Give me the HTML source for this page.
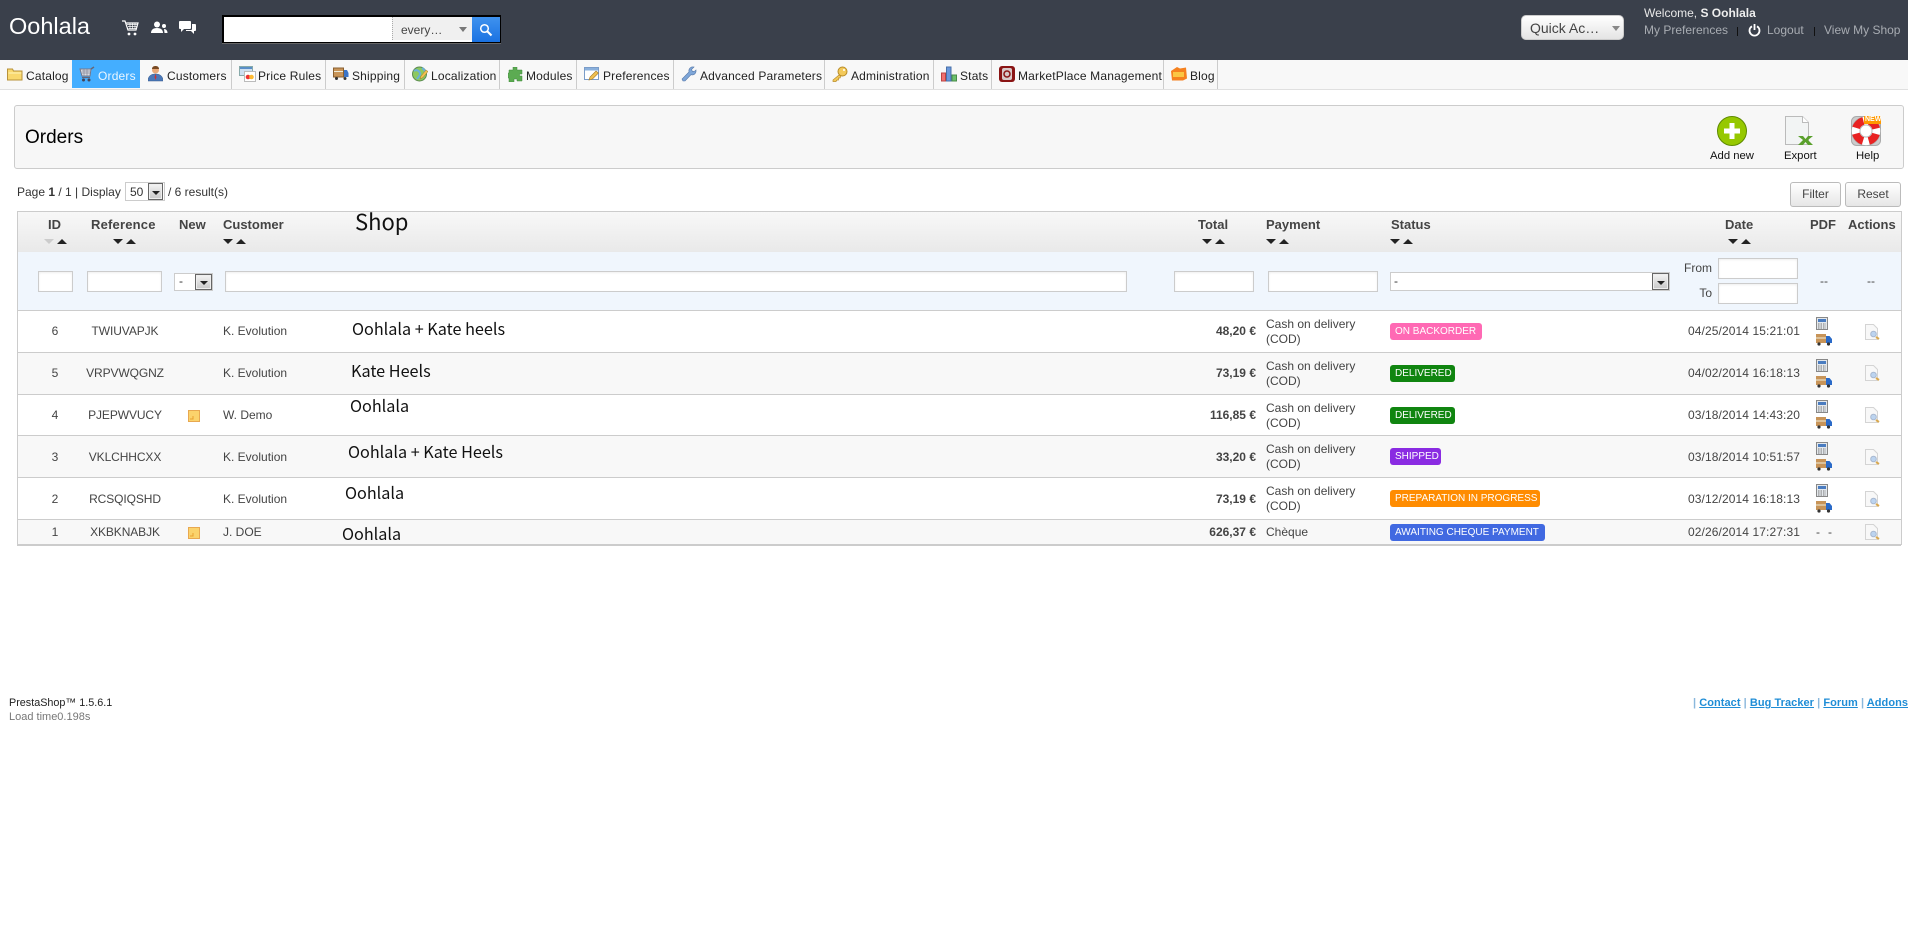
<!DOCTYPE html>
<html lang="en"><head><meta charset="utf-8"><title>Orders</title>
<style>
html,body{margin:0;padding:0;width:1908px;height:950px;overflow:hidden;background:#fff;font-family:"Liberation Sans",Arial,sans-serif;font-size:12px;color:#444}
div,span,a,svg{position:absolute}
b span,b{position:static}
.t{white-space:nowrap;line-height:16px;height:16px}
.h{font-weight:bold;font-size:13px;color:#444;top:217px}
.n{color:#222;top:68px;letter-spacing:.18px}
.sep{top:60px;width:1px;height:29px;background:#ccc}
.dn,.up{width:0;height:0;border-left:5px solid transparent;border-right:5px solid transparent;top:239px}
.dn{border-top:5px solid #222}.up{border-bottom:5px solid #222}
.inp{background:#fff;border:1px solid #ccc;box-sizing:border-box;box-shadow:inset 0 1px 2px #eee}
.sb{box-sizing:border-box;background:linear-gradient(#f4f4f4,#c8c8c8);border:1px solid #666;box-shadow:inset 0 0 0 1px #eee}
.sb:after{content:"";position:absolute;left:50%;top:50%;margin:-1px 0 0 -4px;border-left:4px solid transparent;border-right:4px solid transparent;border-top:4px solid #222}
.hl{left:17px;width:1884px;height:1px;background:#ccc}
.c{text-align:center}
.r{text-align:right}
.s{font-family:"Noto Sans CJK JP","Liberation Sans",sans-serif;color:#111;font-size:16.200px;line-height:24px;height:24px;white-space:nowrap}
.bd{left:1390px;height:17px;border-radius:3px;color:#fff;font-size:10px;line-height:18px;padding:0 5px;white-space:nowrap;box-sizing:border-box}
.btn{box-sizing:border-box;top:182px;height:25px;border:1px solid #bbb;border-radius:3px;background:linear-gradient(#fff,#e6e6e6);text-align:center;line-height:23px;color:#444}
.d{letter-spacing:.1px}
</style></head><body>

<!-- header -->
<div style="left:0;top:0;width:1908px;height:60px;background:#3a404b"></div>
<div class="t" style="left:9px;top:13px;font-size:23.500px;line-height:26px;height:26px;color:#fff">Oohlala</div>
<svg style="left:122px;top:20px" width="17" height="16" viewBox="0 0 17 16"><path d="M0 1h3l3 9h8l2-7H4" fill="none" stroke="#fff" stroke-width="1.200"/><path d="M5 4.500h10M6 6.500h9M6.500 8.500h8M8 3v6M10.500 3v6M13 3v6" stroke="#fff" stroke-width=".7"/><circle cx="7" cy="14" r="1.400" fill="#fff"/><circle cx="13" cy="14" r="1.400" fill="#fff"/></svg>
<svg style="left:151px;top:21px" width="17" height="13" viewBox="0 0 17 13"><circle cx="6" cy="3.500" r="3" fill="#fff"/><path d="M0 12c0-3 2-5 6-5s6 2 6 5z" fill="#fff"/><circle cx="13" cy="5" r="2" fill="#fff"/><path d="M13 8c2 0 3.500 1.500 3.500 4H13.500z" fill="#fff"/></svg>
<svg style="left:179px;top:21px" width="17" height="14" viewBox="0 0 17 14"><path d="M1 0h10c.6 0 1 .4 1 1v6c0 .6-.4 1-1 1H5l-3 3V8H1C.4 8 0 7.600 0 7V1C0 .4.400 0 1 0z" fill="#fff"/><path d="M13 3h3c.6 0 1 .4 1 1v5c0 .6-.4 1-1 1h-1v3l-3-3H7V9h5c.6 0 1-.4 1-1z" fill="#fff"/></svg>

<div style="left:222px;top:15px;width:279px;height:29px;background:#000;border-bottom:1px solid #666;box-sizing:border-box"></div>
<div style="left:224px;top:17px;width:168px;height:25px;background:#fff"></div>
<div style="left:392px;top:17px;width:80px;height:23px;background:#f0f0f0;border-left:1px dotted #aaa;box-sizing:border-box"></div>
<div style="left:392px;top:40px;width:80px;height:2px;background:#fff"></div>
<div class="t" style="left:401px;top:22px;color:#444">every…</div>
<div style="left:459px;top:27px;border-left:4px solid transparent;border-right:4px solid transparent;border-top:5px solid #777"></div>
<div style="left:472px;top:17px;width:28px;height:25px;background:linear-gradient(#3f92ee,#1a72e2)"></div>
<svg style="left:479px;top:23px" width="14" height="14" viewBox="0 0 14 14"><circle cx="5.500" cy="5.500" r="3.800" fill="none" stroke="#fff" stroke-width="1.500"/><path d="M8.500 8.500l4 4" stroke="#fff" stroke-width="2"/></svg>

<div style="left:1521px;top:15px;width:103px;height:25px;box-sizing:border-box;background:linear-gradient(#fff,#e4e4e4);border:1px solid #ccc;border-radius:5px"></div>
<div class="t" style="left:1530px;top:20px;font-size:14px;color:#444">Quick Ac…</div>
<div style="left:1612px;top:26px;border-left:4px solid transparent;border-right:4px solid transparent;border-top:5px solid #888"></div>
<div class="t" style="left:1644px;top:5px;color:#e8e8e8">Welcome, <b style="color:#eee">S Oohlala</b></div>
<div class="t" style="left:1644px;top:22px;color:#a8acb2">My Preferences</div>
<div style="left:1737px;top:27px;width:1px;height:9px;background:#111"></div>
<svg style="left:1748px;top:24px" width="13" height="13" viewBox="0 0 13 13"><path d="M4 2.300a5 5 0 1 0 5 0" fill="none" stroke="#fff" stroke-width="1.800"/><path d="M6.500 0v6" stroke="#fff" stroke-width="1.800"/></svg>
<div class="t" style="left:1767px;top:22px;color:#a8acb2">Logout</div>
<div style="left:1814px;top:27px;width:1px;height:9px;background:#111"></div>
<div class="t" style="left:1824px;top:22px;color:#a8acb2">View My Shop</div>

<!-- nav -->
<div style="left:0;top:60px;width:1908px;height:29px;background:#f8f8f8;border-bottom:1px solid #e0e0e0"></div>
<div style="left:72px;top:60px;width:68px;height:28px;background:#44aeff"></div>
<div class="sep" style="left:231px"></div><div class="sep" style="left:325px"></div><div class="sep" style="left:404px"></div><div class="sep" style="left:499px"></div><div class="sep" style="left:576px"></div><div class="sep" style="left:673px"></div><div class="sep" style="left:824px"></div><div class="sep" style="left:933px"></div><div class="sep" style="left:991px"></div><div class="sep" style="left:1163px"></div><div class="sep" style="left:1217px"></div>

<svg style="left:7px;top:67px" width="16" height="15" viewBox="0 0 16 15"><path d="M.5 13V2h5l1 2h8.500v9z" fill="#f9d86e" stroke="#b8923a"/><path d="M1.500 6h13" stroke="#fff3b8"/></svg>
<div class="t n" style="left:26px">Catalog</div>
<svg style="left:79px;top:66px" width="17" height="16" viewBox="0 0 17 16"><path d="M1 3h11l-1 7H3z" fill="#d8dde2" stroke="#778"/><path d="M3 5h9M3 7h8M5 3v7M8 3v7" stroke="#889" stroke-width=".7"/><path d="M12 3l3-2" stroke="#667" stroke-width="1.500"/><path d="M3 11.500h8" stroke="#667" stroke-width="1.200"/><circle cx="4.500" cy="14" r="1.500" fill="#445"/><circle cx="10" cy="14" r="1.500" fill="#445"/></svg>
<div class="t n" style="left:98px;color:#eaf6ff">Orders</div>
<svg style="left:148px;top:66px" width="15" height="16" viewBox="0 0 15 16"><circle cx="7.500" cy="4" r="3.500" fill="#e8a878"/><path d="M4 3c0-2 1.500-3 3.500-3S11 1 11 3H4z" fill="#7a4a22"/><path d="M0 15c0-5 3-7 7.500-7S15 10 15 15z" fill="#4a78b8" stroke="#36598c" stroke-width=".5"/><path d="M7.500 8l-1 3 1 3 1-3z" fill="#c33"/></svg>
<div class="t n" style="left:167px">Customers</div>
<svg style="left:239px;top:66px" width="17" height="16" viewBox="0 0 17 16"><rect x=".5" y=".5" width="13" height="9" fill="#cfe0f2" stroke="#8aa"/><rect x="1" y="1" width="12" height="2" fill="#5a8fc8"/><rect x="5.500" y="5.500" width="11" height="10" fill="#fff" stroke="#bbb"/><circle cx="9" cy="11" r="2.300" fill="#e33"/><circle cx="12.500" cy="11" r="2.300" fill="#fb3"/></svg>
<div class="t n" style="left:258px">Price Rules</div>
<svg style="left:333px;top:67px" width="16" height="14" viewBox="0 0 16 14"><rect x=".5" y="1" width="10" height="9" fill="#c89458" stroke="#8a6030"/><path d="M1 4.500h9" stroke="#eed" /><path d="M11 3h3l1.500 3v4H11z" fill="#3a74c8"/><circle cx="3.500" cy="11.500" r="1.500" fill="#333"/><circle cx="12" cy="11.500" r="1.500" fill="#333"/></svg>
<div class="t n" style="left:352px">Shipping</div>
<svg style="left:412px;top:66px" width="16" height="16" viewBox="0 0 16 16"><circle cx="7.500" cy="8" r="7" fill="#8cc860" stroke="#5a8a50"/><path d="M2 5c3-2 5 0 6 2s-2 4-3 6M10 2c2 1 3 3 3 4" fill="none" stroke="#6ab0d8" stroke-width="2"/><path d="M8 13l1-3 5-6 2 1.500-5 6z" fill="#f0c050" stroke="#a07828" stroke-width=".5"/></svg>
<div class="t n" style="left:431px">Localization</div>
<svg style="left:508px;top:67px" width="15" height="15" viewBox="0 0 15 15"><path d="M5 0h4v3h5v4h-2.500v2H14v5H9v-2H6v3H1v-4H0V6h1V3h4z" fill="#5cab52" stroke="#3f8a3a" stroke-width=".5"/></svg>
<div class="t n" style="left:526px">Modules</div>
<svg style="left:584px;top:66px" width="16" height="16" viewBox="0 0 16 16"><rect x=".5" y="1.500" width="14" height="12" fill="#fff" stroke="#7a9cc8"/><rect x="1" y="2" width="13" height="2.500" fill="#8ab0dc"/><path d="M5 14l1-3 6-6 2.500 2-6 6z" fill="#f0c050" stroke="#a07828" stroke-width=".6"/></svg>
<div class="t n" style="left:603px">Preferences</div>
<svg style="left:681px;top:66px" width="16" height="16" viewBox="0 0 16 16"><path d="M2 15L1 13l7-7c-.5-2 .5-4 2.500-5 1-.3 2 0 2.500 0l-2.500 2.500 1 2L14 5l1-1c.3 2-.5 3.500-2 4.500-1 .5-2 .5-3 .2L4 15z" fill="#7ea6d8" stroke="#5678a8" stroke-width=".6"/></svg>
<div class="t n" style="left:700px">Advanced Parameters</div>
<svg style="left:832px;top:66px" width="16" height="16" viewBox="0 0 16 16"><circle cx="10.500" cy="5.500" r="4.500" fill="#f3c95a" stroke="#b88c28"/><circle cx="12" cy="4" r="1" fill="#fff"/><path d="M7 9l-6 5v1.500h3l1-1.500h1.500V12H8l1-2z" fill="#f3c95a" stroke="#b88c28" stroke-width=".7"/></svg>
<div class="t n" style="left:851px">Administration</div>
<svg style="left:941px;top:66px" width="16" height="16" viewBox="0 0 16 16"><rect x=".5" y="7" width="4" height="8" fill="#f07070" stroke="#b44"/><rect x="5.500" y="1" width="4.500" height="14" fill="#6a98dc" stroke="#4870a8"/><rect x="11" y="9" width="4.500" height="6" fill="#6cc06c" stroke="#488c48"/></svg>
<div class="t n" style="left:960px">Stats</div>
<svg style="left:999px;top:66px" width="16" height="16" viewBox="0 0 16 16"><rect width="16" height="16" rx="3" fill="#8a1414"/><rect x="3" y="2" width="10" height="12" rx="2" fill="#d8c8c8"/><circle cx="8" cy="8" r="3" fill="none" stroke="#8a1414" stroke-width="1.500"/></svg>
<div class="t n" style="left:1018px">MarketPlace Management</div>
<svg style="left:1171px;top:66px" width="16" height="16" viewBox="0 0 16 16"><path d="M1 14.500L0 5l6-4 3 1.500 6-1 1 11-4 2z" fill="#f5811f"/><path d="M2 6h11v5H2z" fill="#fcd24a" opacity=".85"/></svg>
<div class="t n" style="left:1190px">Blog</div>

<!-- page title -->
<div style="left:14px;top:105px;width:1890px;height:64px;box-sizing:border-box;background:#f7f7f7;border:1px solid #ccc;border-radius:3px"></div>
<div class="t" style="left:25px;top:127px;font-size:19px;line-height:22px;height:22px;color:#000">Orders</div>
<svg style="left:1717px;top:116px" width="30" height="30" viewBox="0 0 30 30"><circle cx="15" cy="15" r="14.500" fill="#96c800" stroke="#5e8a00"/><path d="M12.500 7h5v5.500H23v5h-5.500V23h-5v-5.500H7v-5h5.500z" fill="#fff"/></svg>
<div class="t" style="left:1710px;top:148px;font-size:11.300px;color:#111">Add new</div>
<svg style="left:1785px;top:116px" width="29" height="30" viewBox="0 0 29 30"><path d="M.5.500h17l6 6v22H.5z" fill="#f2f4f4" stroke="#bbb"/><path d="M17.500.5v6h6" fill="#fff" stroke="#bbb"/><path d="M13 20h5l2.500 3 2.500-3h5l-5 4 5 5h-5l-2.500-3-2.500 3h-5l5-5z" fill="#5aa02c"/></svg>
<div class="t" style="left:1784px;top:148px;font-size:11.300px;color:#111">Export</div>
<svg style="left:1851px;top:116px" width="30" height="30" viewBox="0 0 30 30"><rect x=".5" y=".5" width="29" height="29" rx="5" fill="#ccc" stroke="#aaa"/><circle cx="15" cy="15" r="10.500" fill="none" stroke="#fff" stroke-width="8"/><circle cx="15" cy="15" r="10.500" fill="none" stroke="#e82222" stroke-width="8" stroke-dasharray="10.500 6" stroke-dashoffset="-3"/><circle cx="15" cy="15" r="6" fill="#fff" stroke="#bbb"/><circle cx="15" cy="15" r="14.500" fill="none" stroke="#aaa" stroke-width=".6"/><rect x="13" y="0" width="17" height="8" fill="#f90"/></svg>
<div class="t" style="left:1865px;top:115px;font-size:7px;font-weight:bold;color:#fff;line-height:10px;height:10px">NEW</div>
<div class="t" style="left:1856px;top:148px;font-size:11.300px;color:#111">Help</div>

<!-- pagination -->
<div class="t" style="left:17px;top:184px;color:#333">Page <b>1</b> / 1 | Display</div>
<div style="left:125px;top:182px;width:40px;height:19px;box-sizing:border-box;background:#fff;border:1px solid #ccc"></div>
<div class="t" style="left:130px;top:184px;color:#333">50</div>
<div class="sb" style="left:148px;top:183px;width:15px;height:17px"></div>
<div class="t" style="left:168px;top:184px;color:#333">/ 6 result(s)</div>
<div class="btn" style="left:1790px;width:51px">Filter</div>
<div class="btn" style="left:1845px;width:56px">Reset</div>

<!-- table frame -->
<div style="left:17px;top:211px;width:1884px;height:41px;background:linear-gradient(#f8f8f8,#e9e9e9)"></div>
<div style="left:17px;top:252px;width:1884px;height:58px;background:#f0f6fd"></div>
<div style="left:17px;top:352px;width:1884px;height:42px;background:#f8f8f8"></div>
<div style="left:17px;top:435px;width:1884px;height:42px;background:#f8f8f8"></div>
<div style="left:17px;top:519px;width:1884px;height:26px;background:#f8f8f8"></div>
<div class="hl" style="top:211px"></div><div class="hl" style="top:310px"></div><div class="hl" style="top:352px"></div><div class="hl" style="top:394px"></div><div class="hl" style="top:435px"></div><div class="hl" style="top:477px"></div><div class="hl" style="top:519px"></div><div class="hl" style="top:544px;height:2px"></div>
<div style="left:17px;top:211px;width:1px;height:334px;background:#ccc"></div>
<div style="left:1901px;top:211px;width:1px;height:334px;background:#ccc"></div>

<!-- headers -->
<div class="t h" style="left:48px">ID</div>
<div class="t h" style="left:91px;letter-spacing:.2px">Reference</div>
<div class="t h" style="left:179px">New</div>
<div class="t h" style="left:223px">Customer</div>
<div class="t h" style="left:1198px">Total</div>
<div class="t h" style="left:1266px">Payment</div>
<div class="t h" style="left:1391px">Status</div>
<div class="t h" style="left:1725px">Date</div>
<div class="t h" style="left:1810px">PDF</div>
<div class="t h" style="left:1848px">Actions</div>
<div class="s" style="left:355px;top:208px;font-size:22px;line-height:26px;height:26px">Shop</div>

<div class="dn" style="left:44px;border-top-color:#ccc"></div><div class="up" style="left:57px"></div>
<div class="dn" style="left:113px"></div><div class="up" style="left:126px"></div>
<div class="dn" style="left:223px"></div><div class="up" style="left:236px"></div>
<div class="dn" style="left:1202px"></div><div class="up" style="left:1215px"></div>
<div class="dn" style="left:1266px"></div><div class="up" style="left:1279px"></div>
<div class="dn" style="left:1390px"></div><div class="up" style="left:1403px"></div>
<div class="dn" style="left:1728px"></div><div class="up" style="left:1741px"></div>

<!-- filters -->
<div class="inp" style="left:38px;top:271px;width:35px;height:21px"></div>
<div class="inp" style="left:87px;top:271px;width:75px;height:21px"></div>
<div style="left:174px;top:273px;width:39px;height:18px;box-sizing:border-box;background:#fff;border:1px solid #ccc"></div>
<div class="t" style="left:179px;top:273px;color:#333">-</div>
<div class="sb" style="left:195px;top:274px;width:17px;height:16px"></div>
<div class="inp" style="left:225px;top:271px;width:902px;height:21px"></div>
<div class="inp" style="left:1174px;top:271px;width:80px;height:21px"></div>
<div class="inp" style="left:1268px;top:271px;width:110px;height:21px"></div>
<div style="left:1390px;top:272px;width:280px;height:19px;box-sizing:border-box;background:#fff;border:1px solid #ccc"></div>
<div class="t" style="left:1394px;top:273px;color:#333">-</div>
<div class="sb" style="left:1652px;top:273px;width:17px;height:17px"></div>
<div class="t r" style="left:1662px;top:260px;width:50px;color:#444">From</div>
<div class="t r" style="left:1662px;top:285px;width:50px;color:#444">To</div>
<div class="inp" style="left:1718px;top:258px;width:80px;height:21px"></div>
<div class="inp" style="left:1718px;top:283px;width:80px;height:21px"></div>
<div class="t c" style="left:1804px;top:273px;width:40px">--</div>
<div class="t c" style="left:1851px;top:273px;width:40px">--</div>

<!-- rows: id / ref / customer -->
<div class="t c" style="left:35px;top:323px;width:40px">6</div><div class="t c" style="left:75px;top:323px;width:100px;letter-spacing:-.1px">TWIUVAPJK</div><div class="t" style="left:223px;top:323px">K. Evolution</div>
<div class="t c" style="left:35px;top:365px;width:40px">5</div><div class="t c" style="left:75px;top:365px;width:100px;letter-spacing:-.1px">VRPVWQGNZ</div><div class="t" style="left:223px;top:365px">K. Evolution</div>
<div class="t c" style="left:35px;top:407px;width:40px">4</div><div class="t c" style="left:75px;top:407px;width:100px;letter-spacing:-.1px">PJEPWVUCY</div><div class="t" style="left:223px;top:407px">W. Demo</div>
<div class="t c" style="left:35px;top:449px;width:40px">3</div><div class="t c" style="left:75px;top:449px;width:100px;letter-spacing:-.1px">VKLCHHCXX</div><div class="t" style="left:223px;top:449px">K. Evolution</div>
<div class="t c" style="left:35px;top:491px;width:40px">2</div><div class="t c" style="left:75px;top:491px;width:100px;letter-spacing:-.1px">RCSQIQSHD</div><div class="t" style="left:223px;top:491px">K. Evolution</div>
<div class="t c" style="left:35px;top:524px;width:40px">1</div><div class="t c" style="left:75px;top:524px;width:100px;letter-spacing:-.1px">XKBKNABJK</div><div class="t" style="left:223px;top:524px">J. DOE</div>

<svg style="left:188px;top:410px" width="12" height="12" viewBox="0 0 12 12"><rect x=".5" y=".5" width="11" height="11" fill="#fbd36c" stroke="#e8a850"/><path d="M2 9h3V6" fill="none" stroke="#e8a030"/></svg>
<svg style="left:188px;top:527px" width="12" height="12" viewBox="0 0 12 12"><rect x=".5" y=".5" width="11" height="11" fill="#fbd36c" stroke="#e8a850"/><path d="M2 9h3V6" fill="none" stroke="#e8a030"/></svg>

<!-- shop annotations -->
<div class="s" style="left:352px;top:316px">Oohlala + Kate heels</div>
<div class="s" style="left:351px;top:358px">Kate Heels</div>
<div class="s" style="left:350px;top:393px">Oohlala</div>
<div class="s" style="left:348px;top:439px">Oohlala + Kate Heels</div>
<div class="s" style="left:345px;top:480px">Oohlala</div>
<div class="s" style="left:342px;top:521px">Oohlala</div>

<!-- totals -->
<div class="t r" style="left:1156px;top:323px;width:100px"><b>48,20 €</b></div>
<div class="t r" style="left:1156px;top:365px;width:100px"><b>73,19 €</b></div>
<div class="t r" style="left:1156px;top:407px;width:100px"><b>116,85 €</b></div>
<div class="t r" style="left:1156px;top:449px;width:100px"><b>33,20 €</b></div>
<div class="t r" style="left:1156px;top:491px;width:100px"><b>73,19 €</b></div>
<div class="t r" style="left:1156px;top:524px;width:100px"><b>626,37 €</b></div>

<!-- payment -->
<div class="t" style="left:1266px;top:316px">Cash on delivery</div><div class="t" style="left:1266px;top:331px">(COD)</div>
<div class="t" style="left:1266px;top:358px">Cash on delivery</div><div class="t" style="left:1266px;top:373px">(COD)</div>
<div class="t" style="left:1266px;top:400px">Cash on delivery</div><div class="t" style="left:1266px;top:415px">(COD)</div>
<div class="t" style="left:1266px;top:441px">Cash on delivery</div><div class="t" style="left:1266px;top:456px">(COD)</div>
<div class="t" style="left:1266px;top:483px">Cash on delivery</div><div class="t" style="left:1266px;top:498px">(COD)</div>
<div class="t" style="left:1266px;top:524px">Chèque</div>

<!-- status -->
<div class="bd" style="top:323px;width:92px;background:#ff69b4">ON BACKORDER</div>
<div class="bd" style="top:365px;width:65px;background:#108510">DELIVERED</div>
<div class="bd" style="top:407px;width:65px;background:#108510">DELIVERED</div>
<div class="bd" style="top:448px;width:51px;background:#8a2be2">SHIPPED</div>
<div class="bd" style="top:490px;width:150px;background:#ff8c00">PREPARATION IN PROGRESS</div>
<div class="bd" style="top:524px;width:155px;background:#4169e1">AWAITING CHEQUE PAYMENT</div>

<!-- date -->
<div class="t d" style="left:1688px;top:323px">04/25/2014 15:21:01</div>
<div class="t d" style="left:1688px;top:365px">04/02/2014 16:18:13</div>
<div class="t d" style="left:1688px;top:407px">03/18/2014 14:43:20</div>
<div class="t d" style="left:1688px;top:449px">03/18/2014 10:51:57</div>
<div class="t d" style="left:1688px;top:491px">03/12/2014 16:18:13</div>
<div class="t d" style="left:1688px;top:524px">02/26/2014 17:27:31</div>

<!-- pdf icons -->
<svg style="left:1816px;top:317px" width="12" height="13" viewBox="0 0 12 13"><rect x=".5" y=".5" width="11" height="12" fill="#e4e8ec" stroke="#888"/><rect x="2" y="2" width="8" height="3" fill="#4a7cc0"/><path d="M2 7h8M2 9h8M2 11h8" stroke="#777" stroke-dasharray="1.500 1"/></svg>
<svg style="left:1816px;top:334px" width="16" height="12" viewBox="0 0 16 12"><rect x="0" y="0" width="10" height="9" fill="#c89458"/><path d="M0 4h10" stroke="#eed"/><path d="M10 2h3.500L16 5v4h-6z" fill="#2a6ac8"/><circle cx="3" cy="10" r="1.600" fill="#333"/><circle cx="12.500" cy="10" r="1.600" fill="#333"/></svg>
<svg style="left:1816px;top:359px" width="12" height="13" viewBox="0 0 12 13"><rect x=".5" y=".5" width="11" height="12" fill="#e4e8ec" stroke="#888"/><rect x="2" y="2" width="8" height="3" fill="#4a7cc0"/><path d="M2 7h8M2 9h8M2 11h8" stroke="#777" stroke-dasharray="1.500 1"/></svg>
<svg style="left:1816px;top:376px" width="16" height="12" viewBox="0 0 16 12"><rect x="0" y="0" width="10" height="9" fill="#c89458"/><path d="M0 4h10" stroke="#eed"/><path d="M10 2h3.500L16 5v4h-6z" fill="#2a6ac8"/><circle cx="3" cy="10" r="1.600" fill="#333"/><circle cx="12.500" cy="10" r="1.600" fill="#333"/></svg>
<svg style="left:1816px;top:400px" width="12" height="13" viewBox="0 0 12 13"><rect x=".5" y=".5" width="11" height="12" fill="#e4e8ec" stroke="#888"/><rect x="2" y="2" width="8" height="3" fill="#4a7cc0"/><path d="M2 7h8M2 9h8M2 11h8" stroke="#777" stroke-dasharray="1.500 1"/></svg>
<svg style="left:1816px;top:417px" width="16" height="12" viewBox="0 0 16 12"><rect x="0" y="0" width="10" height="9" fill="#c89458"/><path d="M0 4h10" stroke="#eed"/><path d="M10 2h3.500L16 5v4h-6z" fill="#2a6ac8"/><circle cx="3" cy="10" r="1.600" fill="#333"/><circle cx="12.500" cy="10" r="1.600" fill="#333"/></svg>
<svg style="left:1816px;top:442px" width="12" height="13" viewBox="0 0 12 13"><rect x=".5" y=".5" width="11" height="12" fill="#e4e8ec" stroke="#888"/><rect x="2" y="2" width="8" height="3" fill="#4a7cc0"/><path d="M2 7h8M2 9h8M2 11h8" stroke="#777" stroke-dasharray="1.500 1"/></svg>
<svg style="left:1816px;top:459px" width="16" height="12" viewBox="0 0 16 12"><rect x="0" y="0" width="10" height="9" fill="#c89458"/><path d="M0 4h10" stroke="#eed"/><path d="M10 2h3.500L16 5v4h-6z" fill="#2a6ac8"/><circle cx="3" cy="10" r="1.600" fill="#333"/><circle cx="12.500" cy="10" r="1.600" fill="#333"/></svg>
<svg style="left:1816px;top:484px" width="12" height="13" viewBox="0 0 12 13"><rect x=".5" y=".5" width="11" height="12" fill="#e4e8ec" stroke="#888"/><rect x="2" y="2" width="8" height="3" fill="#4a7cc0"/><path d="M2 7h8M2 9h8M2 11h8" stroke="#777" stroke-dasharray="1.500 1"/></svg>
<svg style="left:1816px;top:501px" width="16" height="12" viewBox="0 0 16 12"><rect x="0" y="0" width="10" height="9" fill="#c89458"/><path d="M0 4h10" stroke="#eed"/><path d="M10 2h3.500L16 5v4h-6z" fill="#2a6ac8"/><circle cx="3" cy="10" r="1.600" fill="#333"/><circle cx="12.500" cy="10" r="1.600" fill="#333"/></svg>
<div class="t" style="left:1816px;top:524px">-</div><div class="t" style="left:1828px;top:524px">-</div>

<!-- view icons -->
<svg style="left:1865px;top:324px" width="16" height="16" viewBox="0 0 16 16"><path d="M.5.500h8l4 4v11H.5z" fill="#f8f8f8" stroke="#d4d4d4"/><circle cx="8.500" cy="10" r="2.800" fill="#bcd4f0" stroke="#a8b8d0"/><path d="M11 13l3 2" stroke="#d8a850" stroke-width="2"/></svg>
<svg style="left:1865px;top:365px" width="16" height="16" viewBox="0 0 16 16"><path d="M.5.500h8l4 4v11H.5z" fill="#f8f8f8" stroke="#d4d4d4"/><circle cx="8.500" cy="10" r="2.800" fill="#bcd4f0" stroke="#a8b8d0"/><path d="M11 13l3 2" stroke="#d8a850" stroke-width="2"/></svg>
<svg style="left:1865px;top:407px" width="16" height="16" viewBox="0 0 16 16"><path d="M.5.500h8l4 4v11H.5z" fill="#f8f8f8" stroke="#d4d4d4"/><circle cx="8.500" cy="10" r="2.800" fill="#bcd4f0" stroke="#a8b8d0"/><path d="M11 13l3 2" stroke="#d8a850" stroke-width="2"/></svg>
<svg style="left:1865px;top:449px" width="16" height="16" viewBox="0 0 16 16"><path d="M.5.500h8l4 4v11H.5z" fill="#f8f8f8" stroke="#d4d4d4"/><circle cx="8.500" cy="10" r="2.800" fill="#bcd4f0" stroke="#a8b8d0"/><path d="M11 13l3 2" stroke="#d8a850" stroke-width="2"/></svg>
<svg style="left:1865px;top:491px" width="16" height="16" viewBox="0 0 16 16"><path d="M.5.500h8l4 4v11H.5z" fill="#f8f8f8" stroke="#d4d4d4"/><circle cx="8.500" cy="10" r="2.800" fill="#bcd4f0" stroke="#a8b8d0"/><path d="M11 13l3 2" stroke="#d8a850" stroke-width="2"/></svg>
<svg style="left:1865px;top:524px" width="16" height="16" viewBox="0 0 16 16"><path d="M.5.500h8l4 4v11H.5z" fill="#f8f8f8" stroke="#d4d4d4"/><circle cx="8.500" cy="10" r="2.800" fill="#bcd4f0" stroke="#a8b8d0"/><path d="M11 13l3 2" stroke="#d8a850" stroke-width="2"/></svg>

<!-- footer -->
<div class="t" style="left:9px;top:695px;font-size:10.800px;color:#222">PrestaShop™ 1.5.6.1</div>
<div class="t" style="left:9px;top:709px;font-size:11px;color:#777">Load time0.198s</div>
<div class="t" style="left:1693px;top:695px;font-size:11px;font-weight:bold;color:#8ab8dc;letter-spacing:.05px">| <u style="color:#1f8dd6">Contact</u> | <u style="color:#1f8dd6">Bug Tracker</u> | <u style="color:#1f8dd6">Forum</u> | <u style="color:#1f8dd6">Addons</u></div>
</body></html>
